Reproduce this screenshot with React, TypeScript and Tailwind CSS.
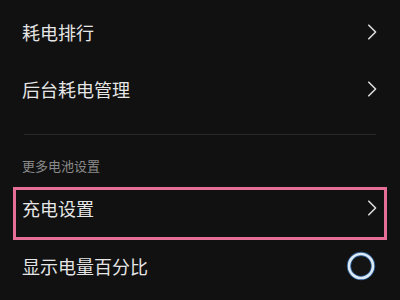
import React from "react";

const Chevron = () => (
  <svg width="10" height="16" viewBox="0 0 10 16" className="shrink-0">
    <path d="M1.8 1.2 L8.6 8 L1.8 14.8" fill="none" stroke="#dcdcdc" strokeWidth="1.6" strokeLinecap="round" strokeLinejoin="round" />
  </svg>
);

export default function App() {
  const font = { fontFamily: '"Noto Sans CJK SC", "Noto Sans", sans-serif' };
  return (
    <div className="w-[400px] h-[300px] bg-[#111111] overflow-hidden flex flex-col pt-[3px]" style={font}>
      <div className="h-[57px] flex items-center justify-between pl-[22px] pr-[23px]">
        <span className="text-[18px] leading-[24px] text-[#e6e6e6]">耗电排行</span>
        <Chevron />
      </div>
      <div className="h-[57px] flex items-center justify-between pl-[22px] pr-[23px]">
        <span className="text-[18px] leading-[24px] text-[#e6e6e6]">后台耗电管理</span>
        <Chevron />
      </div>
      <div className="mt-[17px] mx-[24px] h-px bg-[#2a2a2a]" />
      <div className="h-[52px] pl-[22px] pt-[21px]">
        <span className="block text-[13px] leading-[20px] text-[#8a8a8a]">更多电池设置</span>
      </div>
      <div className="mx-[13px] h-[53px] border-[3px] border-[#e66f98] flex items-start justify-between pl-[6px] pr-[7px] pt-[6px]">
        <span className="text-[18px] leading-[24px] text-[#e6e6e6]">充电设置</span>
        <div className="h-[24px] flex items-center">
          <Chevron />
        </div>
      </div>
      <div className="h-[52px] flex items-center justify-between pl-[22px] pr-[24px]">
        <span className="text-[18px] leading-[24px] text-[#e6e6e6]">显示电量百分比</span>
        <svg width="30" height="30" viewBox="0 0 30 30" className="shrink-0">
          <circle cx="15" cy="15" r="12" fill="none" stroke="#2f6fb0" strokeWidth="4.5" opacity="0.75" />
          <circle cx="15" cy="15" r="12" fill="none" stroke="#dbe8f5" strokeWidth="2.6" />
          <circle cx="15" cy="15" r="9.6" fill="#141414" />
        </svg>
      </div>
    </div>
  );
}
